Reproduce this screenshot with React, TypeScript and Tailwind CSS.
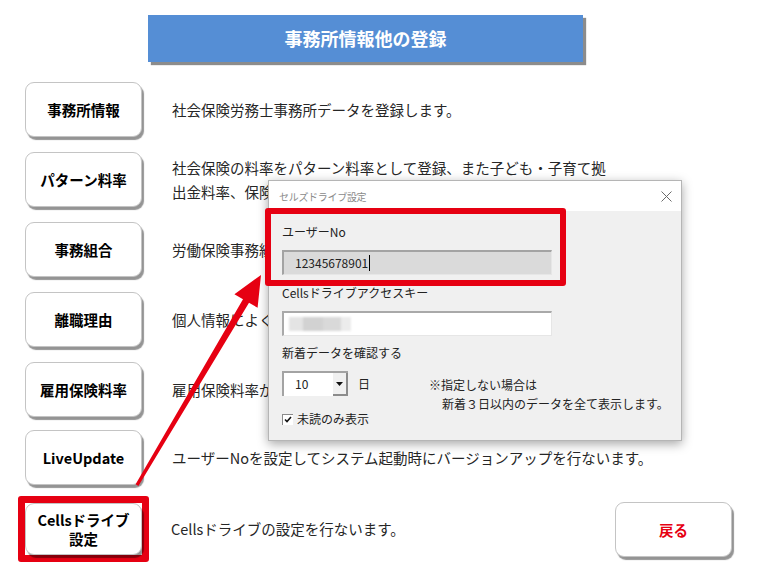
import React from "react";

const jp = "font-['Noto_Sans_CJK_JP','Liberation_Sans',sans-serif]";

type Row = { label: React.ReactNode; desc: React.ReactNode; extra?: string };

const rows: Row[] = [
  { label: "事務所情報", desc: "社会保険労務士事務所データを登録します。" },
  {
    label: "パターン料率",
    desc: (
      <>
        社会保険の料率をパターン料率として登録、また子ども・子育て拠
        <br />
        出金料率、保険料率を登録します。
      </>
    ),
  },
  { label: "事務組合", desc: "労働保険事務組合の情報を登録します。" },
  { label: "離職理由", desc: "個人情報によく使用する離職理由を登録します。" },
  { label: "雇用保険料率", desc: "雇用保険料率が変更された場合に登録します。" },
  {
    label: "LiveUpdate",
    desc: "ユーザーNoを設定してシステム起動時にバージョンアップを行ないます。",
    extra: "-mt-[2px]",
  },
];

function MenuButton({
  children,
  className = "h-[55px]",
  color = "text-black",
}: {
  children: React.ReactNode;
  className?: string;
  color?: string;
}) {
  return (
    <div
      className={`flex w-[117px] shrink-0 items-center justify-center rounded-[9px] border border-[#c4c4c4] bg-white text-center text-[14.5px] leading-[19px] font-bold shadow-[2px_3px_1px_rgba(0,0,0,0.42)] ${color} ${className}`}
    >
      {children}
    </div>
  );
}

function CellsDialog() {
  return (
    <div className="absolute top-[180px] left-[268px] w-[414px] border border-[#b5b5b5] bg-[#f0f0f0] shadow-[0_3px_10px_rgba(0,0,0,0.35)]">
      {/* title bar */}
      <div className="flex h-[30px] items-center justify-between bg-white pr-[9px] pl-[10px]">
        <span className="text-[10px] tracking-[-0.3px] text-[#8a8a8a]">セルズドライブ設定</span>
        <svg width="11" height="11" viewBox="0 0 11 11" className="text-[#6b6b6b]">
          <path d="M0.5 0.5 L10.5 10.5 M10.5 0.5 L0.5 10.5" stroke="currentColor" strokeWidth="1" />
        </svg>
      </div>

      <div className="pt-[12px] pb-[12px] pl-[13px] text-[12px] leading-[18px] text-[#222]">
        <div>ユーザーNo</div>
        <div className="mt-[9px] flex h-[25px] w-[270px] items-center border-t-2 border-r border-b border-l-2 border-t-[#a3a3a3] border-r-[#e6e6e6] border-b-[#e6e6e6] border-l-[#a3a3a3] bg-[#dadada] pl-[11px] text-[12px] text-[#222]">
          12345678901
          <span className="ml-[1px] inline-block h-[16px] w-px bg-black" />
        </div>

        <div className="mt-[9px]">Cellsドライブアクセスキー</div>
        <div className="mt-[9px] flex h-[25px] w-[270px] items-center border-t-2 border-r border-b border-l-2 border-t-[#a9a9a9] border-r-[#e6e6e6] border-b-[#e6e6e6] border-l-[#a9a9a9] bg-white pl-[5px]">
          <div className="flex h-[14px] blur-[1.2px]">
            <div className="w-[14px] bg-[#e4e4e4]" />
            <div className="w-[20px] bg-[#d2d2d2]" />
            <div className="w-[18px] bg-[#d9d9d9]" />
            <div className="w-[10px] bg-[#ececec]" />
          </div>
        </div>

        <div className="mt-[8px]">新着データを確認する</div>

        <div className="mt-[9px] flex items-start">
          <div className="flex flex-col">
            <div className="flex items-center">
              <div className="flex h-[25px] w-[66px] border-t-2 border-l-2 border-t-[#a3a3a3] border-l-[#a3a3a3] bg-white">
                <span className="flex-1 pt-[2px] pl-[11px] text-[12px]">10</span>
                <div className="flex h-full w-[15px] items-center justify-center border-r-2 border-b-2 border-r-[#8c8c8c] border-b-[#8c8c8c] bg-[#f0f0f0]">
                  <svg width="7" height="4" viewBox="0 0 7 4">
                    <path d="M0 0 H7 L3.5 4 Z" fill="#111" />
                  </svg>
                </div>
              </div>
              <span className="ml-[10px]">日</span>
            </div>
            <div className="mt-[14px] flex items-center">
              <div className="flex h-[11px] w-[11px] items-center justify-center border-t border-l border-t-[#8a8a8a] border-l-[#8a8a8a] bg-white">
                <svg width="8" height="7" viewBox="0 0 8 7">
                  <path d="M1 3.5 L3 5.5 L7 1" stroke="#111" strokeWidth="1.6" fill="none" />
                </svg>
              </div>
              <span className="ml-[4px]">未読のみ表示</span>
            </div>
          </div>
          <div className="mt-[4px] ml-[59px] leading-[19px]">
            <div>※指定しない場合は</div>
            <div className="pl-[13px]">新着３日以内のデータを全て表示します。</div>
          </div>
        </div>
      </div>

      {/* red marker round the user number */}
      <div className="absolute top-[27px] left-[-4px] h-[78px] w-[301px] rounded-[3px] border-[6px] border-[#e60012]" />
    </div>
  );
}

function Arrow() {
  return (
    <svg className="pointer-events-none absolute top-0 left-0" width="766" height="588" viewBox="0 0 766 588">
      <polygon
        points="135.6,484.3 243,299.2 234.4,294.2 261,275 257.6,307.8 249,302.8 138.4,485.9"
        fill="#e60012"
      />
    </svg>
  );
}

export default function App() {
  return (
    <div className={`relative h-[588px] w-[766px] overflow-hidden bg-white pt-[15px] ${jp}`}>
      <div className="ml-[148px] flex h-[47px] w-[435px] items-center justify-center bg-[#558ed5] text-[18px] font-bold text-white shadow-[3px_3px_1px_rgba(0,0,0,0.45)]">
        事務所情報他の登録
      </div>

      <div className="mt-[20px] ml-[25px] flex flex-col gap-[15px]">
        {rows.map((r, i) => (
          <div key={i} className={`flex items-center gap-[30px] ${r.extra ?? ""}`}>
            <MenuButton>{r.label}</MenuButton>
            <p className="text-[14.5px] leading-[24px] whitespace-nowrap text-[#262626]">{r.desc}</p>
          </div>
        ))}

        <div className="-mt-[4px] flex items-center pr-[34px]">
          <div className="-ml-[7px] rounded-[3px] border-[7px] border-[#e60012]">
            <MenuButton className="h-[52px]">
              Cellsドライブ
              <br />
              設定
            </MenuButton>
          </div>
          <p className="ml-[22px] text-[14.5px] leading-[24px] text-[#262626]">Cellsドライブの設定を行ないます。</p>
          <div className="ml-auto">
            <MenuButton color="text-[#e60012]">戻る</MenuButton>
          </div>
        </div>
      </div>

      <CellsDialog />
      <Arrow />
    </div>
  );
}
